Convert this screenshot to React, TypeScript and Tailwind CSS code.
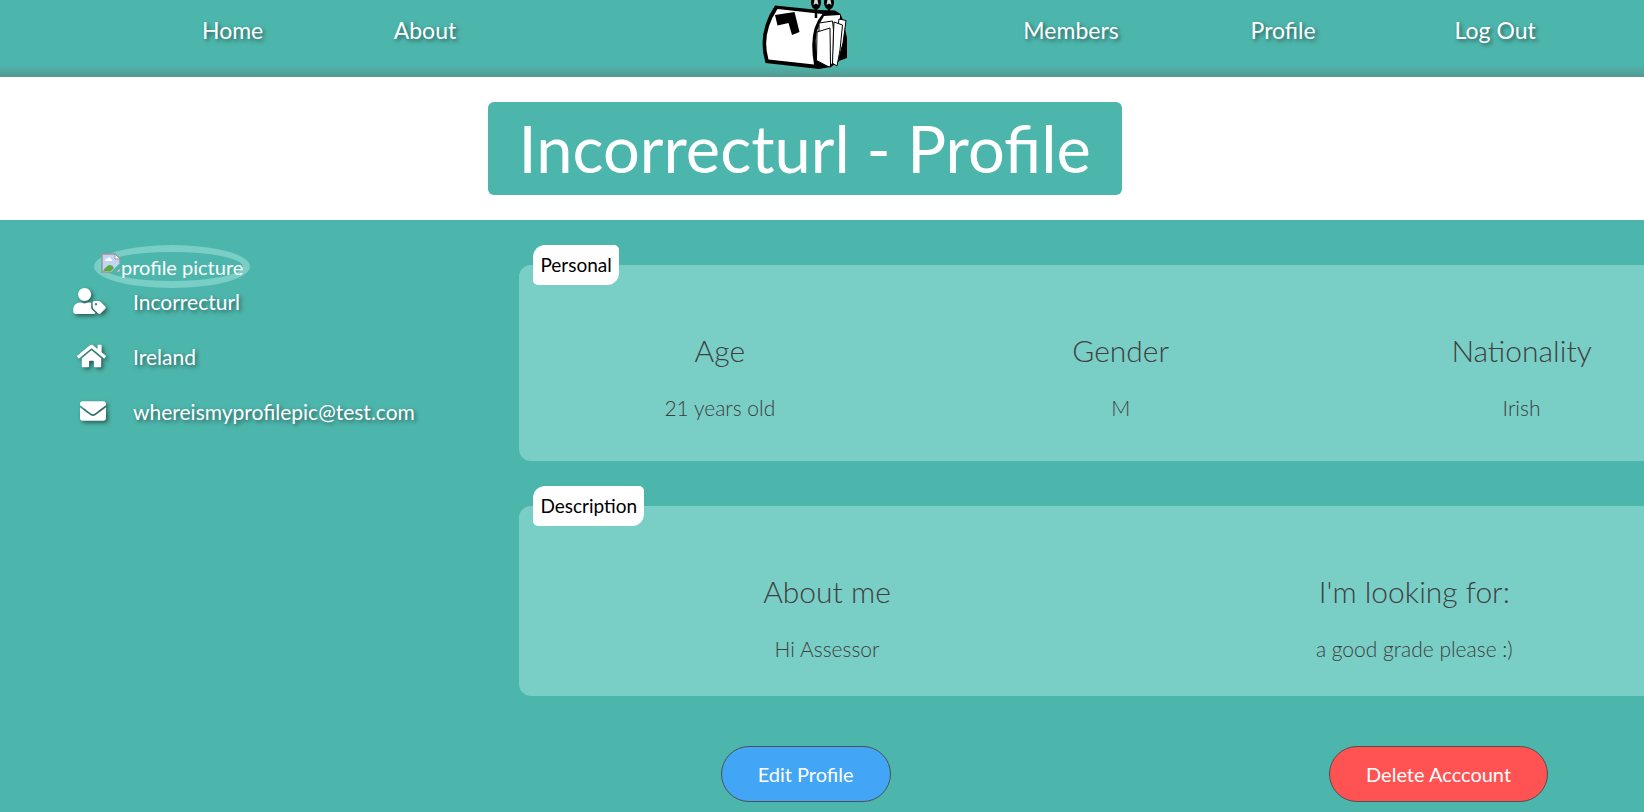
import type { ReactNode } from "react";
import { FaEnvelope, FaHome, FaUserTag } from "react-icons/fa";

const shadow = "[text-shadow:2px_2px_4px_rgba(0,0,0,0.5)]";

function NavLink({ children, className }: { children: ReactNode; className: string }) {
  return (
    <li className={`pt-3 text-center ${className}`}>
      <a href="#" className={`text-[23px] leading-9 text-white ${shadow}`}>{children}</a>
    </li>
  );
}

function Logo() {
  return (
    <svg viewBox="0 0 92 72" className="h-[72px] w-[92px]" role="img" aria-label="Mailbox logo">
      <path d="M16 5.500 L60 10 L76 10.500 L81.500 14 L84 20 L88 38 V58 L80 61 L72 67 L60 69 L6.500 63 Q-2.500 33 16 5.500Z" fill="#000" />
      <path d="M18.500 9 L63.500 14 Q49 30 55 64.500 L9.500 59.500 Q2 34 18.500 9Z" fill="#fff" />
      <path d="M16 15 L35.500 12 L40.500 32 L33 35 L29.500 23 L18.500 25.500Z" fill="#000" />
      <path d="M65 16 L81 15 L80 60 L63 63 L57 50 Q55 30 65 16Z" fill="#fff" />
      <path d="M80 19 L87 20.500 L84 43 L79 62 L74 60Z" fill="#fff" stroke="#000" strokeWidth="1" />
      <path d="M75 22 L83.500 25 L81 50 L78 66 L73 63Z" fill="#fff" stroke="#000" strokeWidth="1" />
      <path d="M60 23 L73.500 21 L74.500 30 L73.500 64 L69 65 L60 60Z" fill="#fff" stroke="#000" strokeWidth="1" />
      <path d="M58 32 L71 28 L71.500 67 L68 66 L57.500 60.500Z" fill="#fff" stroke="#000" strokeWidth="1" />
      <path d="M57 8 V18 M70 8 V12" stroke="#000" strokeWidth="2.500" fill="none" />
      <ellipse cx="57" cy="2.500" rx="5" ry="7" fill="#000" />
      <ellipse cx="70" cy="2.500" rx="5" ry="7" fill="#000" />
      <path d="M55.500 0 L58.500 0 L59.500 5 L57 3.500 L54.500 5Z M68.500 0 L71.500 0 L72.500 5 L70 3.500 L67.500 5Z" fill="#d7dcdc" />
    </svg>
  );
}

function BrokenImage() {
  return (
    <svg viewBox="0 0 20 20" className="-mt-2 h-5 w-5 shrink-0" aria-hidden="true">
      <path d="M1 1 H14 L19 6 V10 L10 19 H1Z" fill="#c3d3f3" />
      <path d="M2 18 Q9 8 13 15 L10 18Z" fill="#5aac36" />
      <path d="M4 8 Q4 5 6.500 5.500 Q9 3 10 6 Q12 6.500 11 8Z" fill="#fff" />
      <path d="M10 19 H1 V1 H14 L19 6 V10" fill="none" stroke="#999" strokeWidth="1.500" />
      <path d="M14 1 V6 H19Z" fill="#fff" stroke="#999" />
      <path d="M15 19 H19 V15Z" fill="#c3d3f3" stroke="#999" />
    </svg>
  );
}

function Contact({ icon, children }: { icon: ReactNode; children: ReactNode }) {
  return (
    <li className="flex h-[55px] items-start">
      <span className="flex w-[34px] justify-end text-white [filter:drop-shadow(2px_2px_2px_rgba(0,0,0,0.5))]">{icon}</span>
      <span className={`pl-[27px] text-[21px] leading-7 text-white ${shadow}`}>{children}</span>
    </li>
  );
}

function Panel({ title, className, children }: { title: string; className: string; children: ReactNode }) {
  return (
    <section className="ml-[18px] w-[95%]">
      <h2 className="relative z-10 -mb-5 ml-3.5 w-fit rounded-[12px_5px_12px_5px] bg-white px-[7px] text-[19px] leading-10 text-black">{title}</h2>
      <div className={`flex rounded-xl bg-[#79cec6] text-center font-light text-[#404040] ${className}`}>{children}</div>
    </section>
  );
}

function Field({ label, value }: { label: string; value: string }) {
  return (
    <div className="flex-1">
      <h3 className="text-[30px] leading-[30px]">{label}</h3>
      <p className="mt-[27px] text-[21px] leading-8">{value}</p>
    </div>
  );
}

export default function App() {
  return (
    <div className="min-h-screen overflow-hidden bg-[#4db6ac] font-['Lato',sans-serif]">
      <header className="bg-[linear-gradient(to_top,#529a92,#4db6ac_12px)]">
        <nav>
          <ul className="flex h-[77px]">
            <NavLink className="ml-[8.3%] w-[11.7%]">Home</NavLink>
            <NavLink className="w-[11.7%]">About</NavLink>
            <li className="ml-[7.5%] flex w-[19.5%] justify-center">
              <a href="#" aria-label="Mailbox home"><Logo /></a>
            </li>
            <NavLink className="w-[12.9%]">Members</NavLink>
            <NavLink className="w-[12.9%]">Profile</NavLink>
            <NavLink className="w-[12.9%]">Log Out</NavLink>
          </ul>
        </nav>
      </header>
      <div className="flex justify-center bg-white py-[25px] pr-[2.1%]">
        <h1 className="rounded-md bg-[#4db6ac] px-[31px] text-[65px] leading-[93px] text-white">Incorrecturl - Profile</h1>
      </div>
      <main className="flex pt-[25px]">
        <aside className="w-[30.5%] shrink-0 pl-[72px]">
          <div className="ml-[22px] flex h-[43px] w-fit items-center rounded-[50%] border-[7px] border-[#79cec6] text-[20px] text-white">
            <BrokenImage />
            <span>profile picture</span>
          </div>
          <ul>
            <Contact icon={<FaUserTag className="h-[26px] w-[33px] shrink-0" />}>Incorrecturl</Contact>
            <Contact icon={<FaHome className="h-[26px] w-[29px] shrink-0" />}>Ireland</Contact>
            <Contact icon={<FaEnvelope className="h-[26px] w-[26px] shrink-0" />}>whereismyprofilepic@test.com</Contact>
          </ul>
        </aside>
        <div className="w-[77%] shrink-0">
          <Panel title="Personal" className="pt-[70px] pb-[37px]">
            <Field label="Age" value="21 years old" />
            <Field label="Gender" value="M" />
            <Field label="Nationality" value="Irish" />
          </Panel>
          <div className="h-[25px]" />
          <Panel title="Description" className="px-3.5 pt-[70px] pb-[31px]">
            <Field label="About me" value="Hi Assessor" />
            <Field label="I'm looking for:" value="a good grade please :)" />
          </Panel>
          <div className="flex justify-around pt-[50px] pb-2.5 text-[20px] text-white">
            <button className="h-14 rounded-full border border-[#505050] bg-[#42a5f5] px-9">Edit Profile</button>
            <button className="h-14 rounded-full border border-[#505050] bg-[#ff5252] px-9">Delete Acccount</button>
          </div>
        </div>
      </main>
    </div>
  );
}
